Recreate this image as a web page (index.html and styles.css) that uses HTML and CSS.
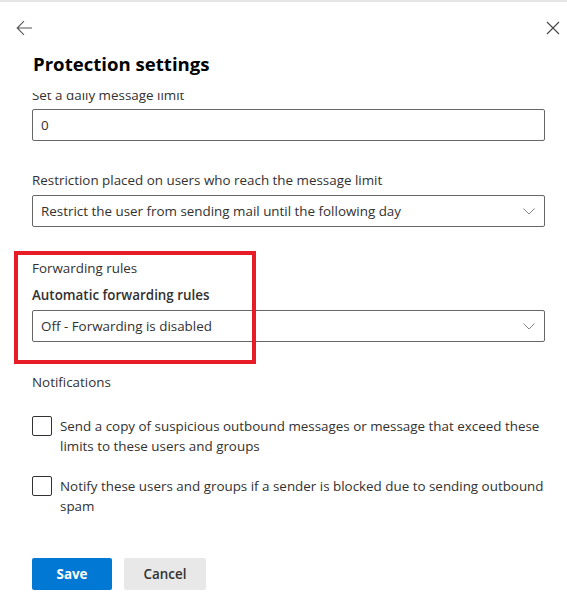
FILE: index.html
```html
<!DOCTYPE html>
<html lang="en">
<head>
<meta charset="utf-8">
<title>Protection settings</title>
<link rel="stylesheet" href="styles.css">
</head>
<body>
<div class="panel">
  <div class="header">
    <button class="icon-btn" aria-label="Back">
      <svg width="17" height="16" viewBox="0 0 17 16"><path d="M16 8H1.5M8 1.2L1.2 8L8 14.8" fill="none" stroke="#555" stroke-width="1.1"/></svg>
    </button>
    <button class="icon-btn" aria-label="Close">
      <svg width="14" height="14" viewBox="0 0 14 14"><path d="M1 1L13 13M13 1L1 13" fill="none" stroke="#444" stroke-width="1.1"/></svg>
    </button>
  </div>
  <h1 class="title">Protection settings</h1>
  <div class="scroll">
    <div class="content">
      <label class="label first">Set a daily message limit</label>
      <div class="field">0</div>

      <label class="label spaced">Restriction placed on users who reach the message limit</label>
      <div class="field select">
        <span>Restrict the user from sending mail until the following day</span>
        <svg class="chev" width="12" height="7" viewBox="0 0 12 7"><path d="M0.5 0.5L6 6L11.5 0.5" fill="none" stroke="#8a8886" stroke-width="1"/></svg>
      </div>

      <div class="section">
        <div class="section-title">Forwarding rules</div>
        <label class="label strong">Automatic forwarding rules</label>
        <div class="field select">
          <span>Off - Forwarding is disabled</span>
          <svg class="chev" width="12" height="7" viewBox="0 0 12 7"><path d="M0.5 0.5L6 6L11.5 0.5" fill="none" stroke="#8a8886" stroke-width="1"/></svg>
        </div>
        <div class="highlight"></div>
      </div>

      <div class="notif-title">Notifications</div>
      <div class="check">
        <span class="box"></span>
        <span class="check-text">Send a copy of suspicious outbound messages or message that exceed these limits to these users and groups</span>
      </div>
      <div class="check second">
        <span class="box"></span>
        <span class="check-text">Notify these users and groups if a sender is blocked due to sending outbound spam</span>
      </div>

      <div class="actions">
        <button class="btn primary">Save</button>
        <button class="btn default">Cancel</button>
      </div>
    </div>
  </div>
</div>
</body>
</html>
```

FILE: styles.css
```css
html, body {
  margin: 0;
  padding: 0;
  background: #ffffff;
}
body {
  font-family: "Open Sans", "Noto Sans", sans-serif;
  font-size: 13.4px;
  color: #323130;
  height: 606px;
  overflow: hidden;
}
.panel {
  border-top: 2px solid #e6e6e6;
  height: 604px;
  display: flex;
  flex-direction: column;
}
.header {
  display: flex;
  justify-content: space-between;
  align-items: center;
  padding: 15px 5px 0 14px;
  height: 22px;
}
.icon-btn {
  background: none;
  border: 0;
  padding: 0 2px;
  margin: 0;
  display: flex;
  align-items: center;
  cursor: pointer;
}
.title {
  margin: 11px 0 0 33px;
  font-size: 18.6px;
  font-weight: 700;
  line-height: 28px;
  color: #000;
}
.scroll {
  margin-top: 15px;
  flex: 1;
  overflow: hidden;
}
.content {
  padding: 0 22px 0 32px;
  display: flex;
  flex-direction: column;
}
.label {
  display: block;
  padding: 5px 0;
  line-height: 20px;
}
.label.first {
  margin-top: -13px;
  padding-bottom: 4px;
}
.label.spaced {
  margin-top: 24px;
}
.label.strong {
  font-weight: 600;
}
.field {
  height: 32px;
  box-sizing: border-box;
  border: 1px solid #666;
  border-radius: 2px;
  padding: 0 8px;
  display: flex;
  align-items: center;
  justify-content: space-between;
  line-height: 20px;
}
.select .chev {
  margin-right: 1px;
}
.section {
  position: relative;
  margin-top: 31px;
}
.section-title {
  line-height: 20px;
  margin-bottom: 2px;
}
.highlight {
  position: absolute;
  left: -18px;
  top: -7px;
  width: 234px;
  height: 105px;
  border: 4px solid #e81c27;
}
.notif-title {
  margin-top: 30px;
  line-height: 20px;
}
.check {
  display: flex;
  align-items: flex-start;
  gap: 8px;
  margin-top: 24px;
  line-height: 20px;
}
.check.second {
  margin-top: 20px;
}
.box {
  flex: none;
  width: 20px;
  height: 20px;
  box-sizing: border-box;
  border: 1px solid #323130;
  border-radius: 2px;
}
.actions {
  display: flex;
  gap: 12px;
  margin-top: 42px;
}
.btn {
  height: 32px;
  border: 0;
  border-radius: 2px;
  font-family: inherit;
  font-size: 13.4px;
  font-weight: 600;
  padding: 0;
}
.btn.primary {
  width: 80px;
  background: #0078d4;
  color: #fff;
  font-weight: 700;
}
.btn.default {
  width: 82px;
  background: #e8e8e8;
  color: #323130;
}
```
